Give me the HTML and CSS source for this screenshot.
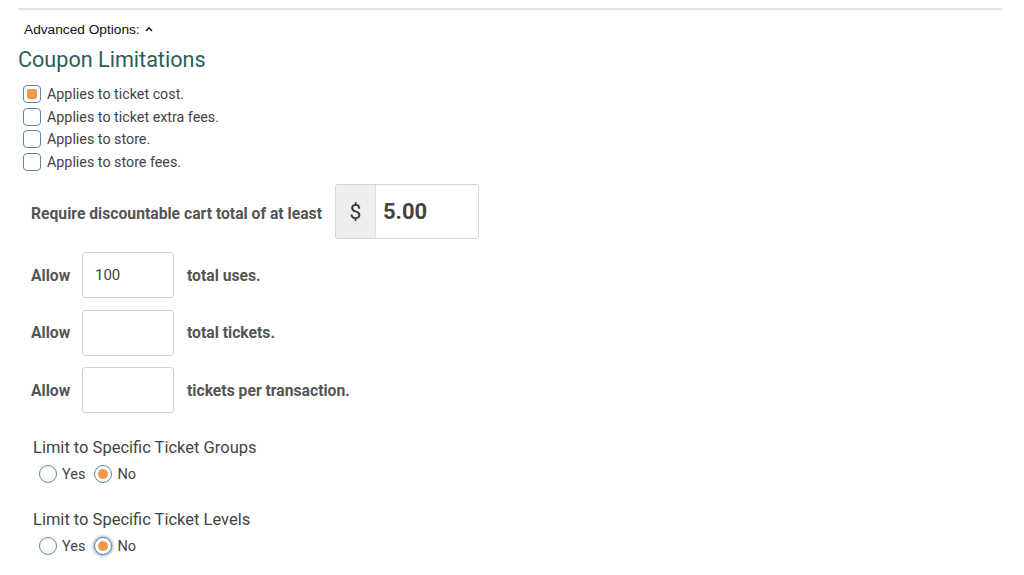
FILE: index.html
```html
<!DOCTYPE html>
<html lang="en">
<head>
    <meta charset="UTF-8">
    <meta name="viewport" content="width=device-width, initial-scale=1.0">
    <title>Coupon Limitations</title>
    <link rel="stylesheet" href="styles.css">
</head>
<body>
    <div class="wrap">
        <div class="rule"></div>

        <div class="adv-toggle">
            Advanced Options:
            <svg class="caret" width="8" height="6" viewBox="0 0 8 6"><path d="M1 5 L4 1.8 L7 5" fill="none" stroke="#111" stroke-width="1.4"/></svg>
        </div>

        <h2 class="section-title">Coupon Limitations</h2>

        <div class="check-list">
            <label class="check-row"><span class="box checked"></span>Applies to ticket cost.</label>
            <label class="check-row"><span class="box"></span>Applies to ticket extra fees.</label>
            <label class="check-row"><span class="box"></span>Applies to store.</label>
            <label class="check-row"><span class="box"></span>Applies to store fees.</label>
        </div>

        <div class="cart-row">
            <span class="field-label">Require discountable cart total of at least</span>
            <div class="input-group">
                <span class="addon">$</span>
                <span class="money">5.00</span>
            </div>
        </div>

        <div class="allow-row">
            <span class="field-label allow">Allow</span>
            <span class="num-input">100</span>
            <span class="field-label">total uses.</span>
        </div>
        <div class="allow-row">
            <span class="field-label allow">Allow</span>
            <span class="num-input"></span>
            <span class="field-label">total tickets.</span>
        </div>
        <div class="allow-row">
            <span class="field-label allow">Allow</span>
            <span class="num-input"></span>
            <span class="field-label">tickets per transaction.</span>
        </div>

        <div class="limit-block">
            <div class="limit-label">Limit to Specific Ticket Groups</div>
            <div class="radio-row">
                <label class="radio"><span class="dot"></span>Yes</label>
                <label class="radio"><span class="dot on"></span>No</label>
            </div>
        </div>

        <div class="limit-block">
            <div class="limit-label">Limit to Specific Ticket Levels</div>
            <div class="radio-row">
                <label class="radio"><span class="dot"></span>Yes</label>
                <label class="radio"><span class="dot on focus"></span>No</label>
            </div>
        </div>
    </div>
</body>
</html>
```

FILE: styles.css
```css
body { margin: 0; background: #fff; font-family: Roboto, "Liberation Sans", Arial, sans-serif; color: #444; }
.wrap { margin: 0 22px 0 18px; }
.rule { margin-top: 8px; height: 2px; background: #dfe3e7; }

.adv-toggle { margin-top: 10px; padding-left: 6px; font-family: "Liberation Sans", Arial, sans-serif; font-size: 13.7px; line-height: 20px; color: #111; }
.caret { margin-left: 2px; vertical-align: 2px; }

.section-title { margin: 7px 0 0; font-size: 21.6px; font-weight: 400; line-height: 26px; color: #2b5e59; }

.check-list { margin-top: 10px; padding-left: 5px; }
.check-row { display: flex; align-items: center; gap: 6px; height: 22.6px; font-size: 14.3px; color: #444; }
.box { width: 18px; height: 18px; box-sizing: border-box; border: 1.5px solid #5f84a0; border-radius: 4px; display: flex; align-items: center; justify-content: center; background: #fff; }
.box.checked::after { content: ""; width: 10px; height: 10px; border-radius: 2px; background: #f0994a; }

.field-label { font-size: 15.7px; font-weight: 700; color: #555; }
.field-label.allow { width: 38px; }

.cart-row { margin-top: 11px; padding-left: 13px; display: flex; align-items: center; gap: 13px; }
.cart-row .field-label { padding-top: 3px; }
.input-group { display: flex; height: 53px; border: 1px solid #d4d4d4; border-radius: 3px; overflow: hidden; }
.addon { width: 39px; background: #eeeeee; border-right: 1px solid #e0e0e0; display: flex; align-items: center; justify-content: center; font-size: 21px; color: #333; }
.money { width: 95px; padding-left: 7px; display: flex; align-items: center; font-size: 22px; font-weight: 700; color: #444; }

.allow-row { margin-top: 11.5px; padding-left: 13px; display: flex; align-items: center; gap: 13px; }
.cart-row + .allow-row { margin-top: 13px; }
.num-input { width: 92px; height: 46px; box-sizing: border-box; border: 1px solid #d0d0d0; border-radius: 3px; padding-left: 12px; display: flex; align-items: center; font-size: 15px; color: #444; }

.limit-block { margin-top: 24px; padding-left: 15px; }
.limit-label { font-size: 16.5px; line-height: 22px; color: #444; }
.radio-row { margin-top: 4px; padding-left: 6px; display: flex; align-items: center; gap: 9px; height: 22px; }
.radio { display: flex; align-items: center; gap: 5px; font-size: 14.5px; color: #444; }
.dot { width: 18px; height: 18px; box-sizing: border-box; border: 1.5px solid #5f84a0; border-radius: 50%; display: flex; align-items: center; justify-content: center; background: #fff; }
.dot.on::after { content: ""; width: 10px; height: 10px; border-radius: 50%; background: #f0994a; }
.dot.focus { box-shadow: 0 0 3px 1px rgba(60, 110, 150, 0.55); }
```
